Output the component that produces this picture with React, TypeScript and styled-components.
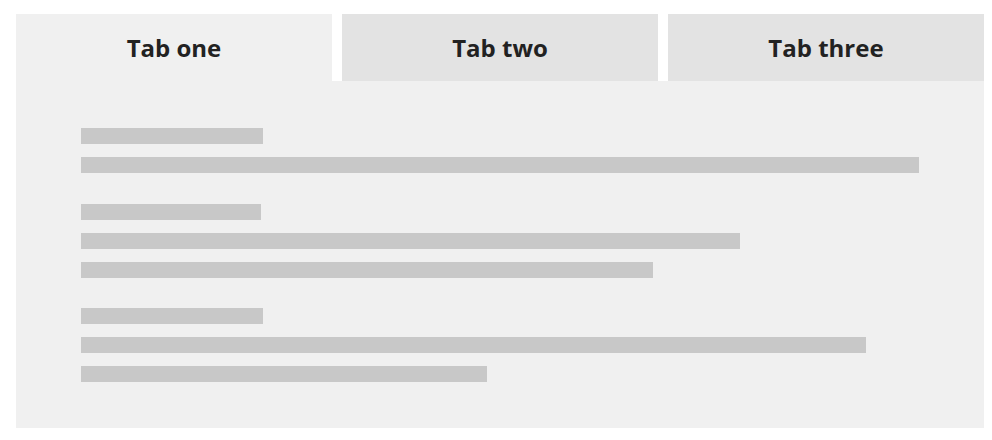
import React, { useState } from 'react';
import styled, { createGlobalStyle } from 'styled-components';

const GlobalStyle = createGlobalStyle`
  * {
    box-sizing: border-box;
  }
  body {
    margin: 0;
    background: #fff;
    font-family: 'Open Sans', 'Liberation Sans', sans-serif;
  }
`;

const Page = styled.div`
  padding: 14px 8px 12px 16px;
`;

const Panel = styled.div`
  width: 968px;
  background: #f0f0f0;
`;

const TabList = styled.div`
  display: flex;
  gap: 10px;
  background: #fff;
`;

const Tab = styled.button<{ active?: boolean }>`
  flex: 1;
  height: 67px;
  border: 0;
  padding: 0;
  margin: 0;
  background: ${(p) => (p.active ? '#f0f0f0' : '#e3e3e3')};
  color: #222;
  font-family: 'Open Sans', 'Liberation Sans', sans-serif;
  font-weight: 700;
  font-size: 24px;
  line-height: 1;
  cursor: pointer;
`;

const Content = styled.div`
  padding: 47px 65px 46px 65px;
  display: flex;
  flex-direction: column;
  gap: 30.5px;
`;

const Group = styled.div`
  display: flex;
  flex-direction: column;
  gap: 13px;
`;

const Bar = styled.div<{ w: number }>`
  height: 16px;
  width: ${(p) => p.w}px;
  background: #c8c8c8;
`;

const tabs = ['Tab one', 'Tab two', 'Tab three'];

const groups = [
  [182, 838],
  [180, 659, 572],
  [182, 785, 406],
];

const App = () => {
  const [current, setCurrent] = useState(0);

  return (
    <>
      <GlobalStyle />
      <Page>
        <Panel>
          <TabList>
            {tabs.map((t, i) => (
              <Tab key={t} active={i === current} onClick={() => setCurrent(i)}>
                {t}
              </Tab>
            ))}
          </TabList>
          <Content>
            {groups.map((g, i) => (
              <Group key={i}>
                {g.map((w, j) => (
                  <Bar key={j} w={w} />
                ))}
              </Group>
            ))}
          </Content>
        </Panel>
      </Page>
    </>
  );
};

export default App;
